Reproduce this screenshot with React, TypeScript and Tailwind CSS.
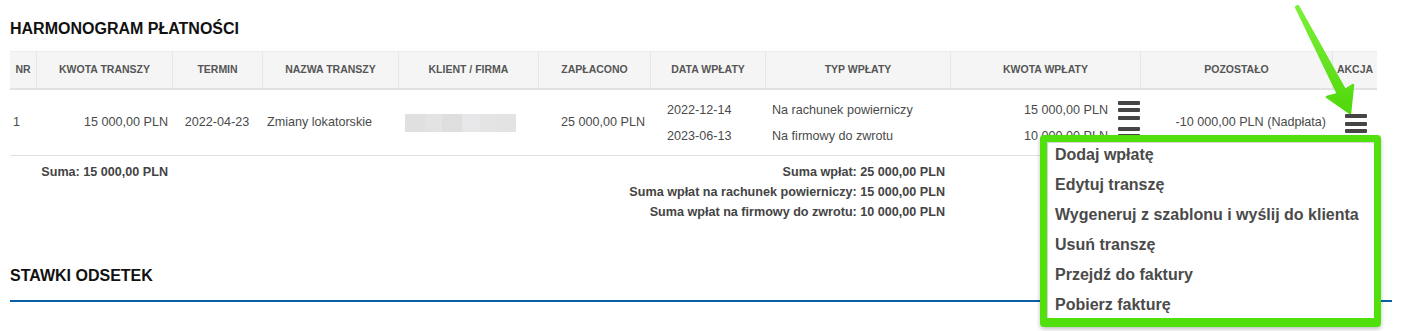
import React from "react";

const cols =
  "grid grid-cols-[26px_136px_90px_136px_140px_112px_115px_185px_190px_192px_45px]";

function Burger({ className = "" }: { className?: string }) {
  return (
    <div className={"flex flex-col gap-[3.5px] w-[22px] " + className}>
      <div className="h-[4px] w-[22px] rounded-[1px] bg-[#454545]" />
      <div className="h-[4px] w-[22px] rounded-[1px] bg-[#454545]" />
      <div className="h-[4px] w-[22px] rounded-[1px] bg-[#454545]" />
    </div>
  );
}

const headers = [
  "NR",
  "KWOTA TRANSZY",
  "TERMIN",
  "NAZWA TRANSZY",
  "KLIENT / FIRMA",
  "ZAPŁACONO",
  "DATA WPŁATY",
  "TYP WPŁATY",
  "KWOTA WPŁATY",
  "POZOSTAŁO",
  "AKCJA",
];

const menuItems = [
  "Dodaj wpłatę",
  "Edytuj transzę",
  "Wygeneruj z szablonu i wyślij do klienta",
  "Usuń transzę",
  "Przejdź do faktury",
  "Pobierz fakturę",
];

export default function App() {
  return (
    <div className="relative w-[1402px] h-[331px] overflow-hidden bg-white font-['Liberation_Sans',Arial,sans-serif] text-[#4a4a4a]">
      <div className="px-[10px] pt-[19px]">
        <h2 className="text-[16px] leading-[20px] font-bold text-[#111]">
          HARMONOGRAM PŁATNOŚCI
        </h2>

        <div className="mt-[12px] w-[1367px]">
          {/* header */}
          <div
            className={
              cols +
              " h-[39px] bg-[#f5f5f5] border-t border-t-[#ececec] border-b-2 border-b-[#e2e2e2]"
            }
          >
            {headers.map((h, i) => (
              <div
                key={h}
                className={
                  "flex items-center justify-center text-[10.5px] font-bold text-[#555] whitespace-nowrap " +
                  (i > 0 ? "border-l border-[#e6e6e6]" : "")
                }
              >
                {h}
              </div>
            ))}
          </div>

          {/* body row */}
          <div className={cols + " h-[66px] border-b border-[#e2e2e2] text-[12.6px]"}>
            <div className="flex items-center pl-[3px]">1</div>
            <div className="flex items-center justify-end pr-[4px]">15 000,00 PLN</div>
            <div className="flex items-center justify-center">2022-04-23</div>
            <div className="flex items-center pl-[5px]">Zmiany lokatorskie</div>
            <div className="flex items-center pl-[7px]">
              <div className="flex h-[18px] w-[111px]">
                <div className="w-[20px] bg-[#e0e0e0]" />
                <div className="w-[17px] bg-[#e3e3e3]" />
                <div className="w-[20px] bg-[#dedede]" />
                <div className="w-[18px] bg-[#e7e7e9]" />
                <div className="w-[17px] bg-[#e4e4e4]" />
                <div className="w-[19px] bg-[#e3e3e3]" />
              </div>
            </div>
            <div className="flex items-center justify-end pr-[5px]">25 000,00 PLN</div>
            <div className="flex flex-col pt-[7px] pl-[17px]">
              <div className="h-[26px] flex items-center">2022-12-14</div>
              <div className="h-[26px] flex items-center">2023-06-13</div>
            </div>
            <div className="flex flex-col pt-[7px] pl-[7px]">
              <div className="h-[26px] flex items-center">Na rachunek powierniczy</div>
              <div className="h-[26px] flex items-center">Na firmowy do zwrotu</div>
            </div>
            <div className="flex flex-col pt-[7px]">
              <div className="h-[26px] flex items-center justify-end gap-[10px]">
                <span>15 000,00 PLN</span>
                <Burger />
              </div>
              <div className="h-[26px] flex items-center justify-end gap-[10px]">
                <span>10 000,00 PLN</span>
                <Burger />
              </div>
            </div>
            <div className="flex items-center justify-end pr-[6px]">
              -10 000,00 PLN (Nadpłata)
            </div>
            <div className="flex items-center justify-center pl-[3px] pt-[2px]">
              <Burger />
            </div>
          </div>

          {/* footer */}
          <div className={cols + " pt-[6px] text-[12.6px] font-bold text-[#444]"}>
            <div className="col-span-2 text-right pr-[4px] leading-[20px]">
              Suma: 15 000,00 PLN
            </div>
            <div className="col-span-6 text-right pr-[5px] leading-[20px]">
              <div>Suma wpłat: 25 000,00 PLN</div>
              <div>Suma wpłat na rachunek powierniczy: 15 000,00 PLN</div>
              <div>Suma wpłat na firmowy do zwrotu: 10 000,00 PLN</div>
            </div>
          </div>
        </div>

        <h2 className="mt-[44px] pb-[14px] text-[16px] leading-[20px] font-bold text-[#111] border-b-2 border-[#0b5fa5]">
          STAWKI ODSETEK
        </h2>
      </div>

      {/* dropdown menu (highlighted) */}
      <div className="absolute left-[1040px] top-[135px] w-[341px] h-[192px] border-[7px] border-b-[9px] border-[#52e00c] rounded-[4px] bg-white shadow-[0_2px_4px_rgba(0,0,0,0.25)] overflow-hidden">
        <div className="h-full border-l border-t border-[#d6d6d6] pl-[7px]">
          {menuItems.map((m) => (
            <div
              key={m}
              className="h-[30px] leading-[24px] text-[16px] font-bold text-[#4a4a4a] whitespace-nowrap"
            >
              {m}
            </div>
          ))}
        </div>
      </div>

      {/* green arrow */}
      <svg
        className="absolute left-0 top-0 pointer-events-none"
        width="1402"
        height="331"
        viewBox="0 0 1402 331"
      >
        <defs>
          <linearGradient id="ag" x1="0" y1="0" x2="0" y2="1">
            <stop offset="0" stopColor="#7cf03a" />
            <stop offset="1" stopColor="#4fd80a" />
          </linearGradient>
        </defs>
        <polygon
          points="1296,7 1298,6 1345,90 1353,85 1350,113 1327,97 1338,94"
          fill="url(#ag)"
          stroke="url(#ag)"
          strokeWidth="2.5"
          strokeLinejoin="round"
        />
      </svg>
    </div>
  );
}
